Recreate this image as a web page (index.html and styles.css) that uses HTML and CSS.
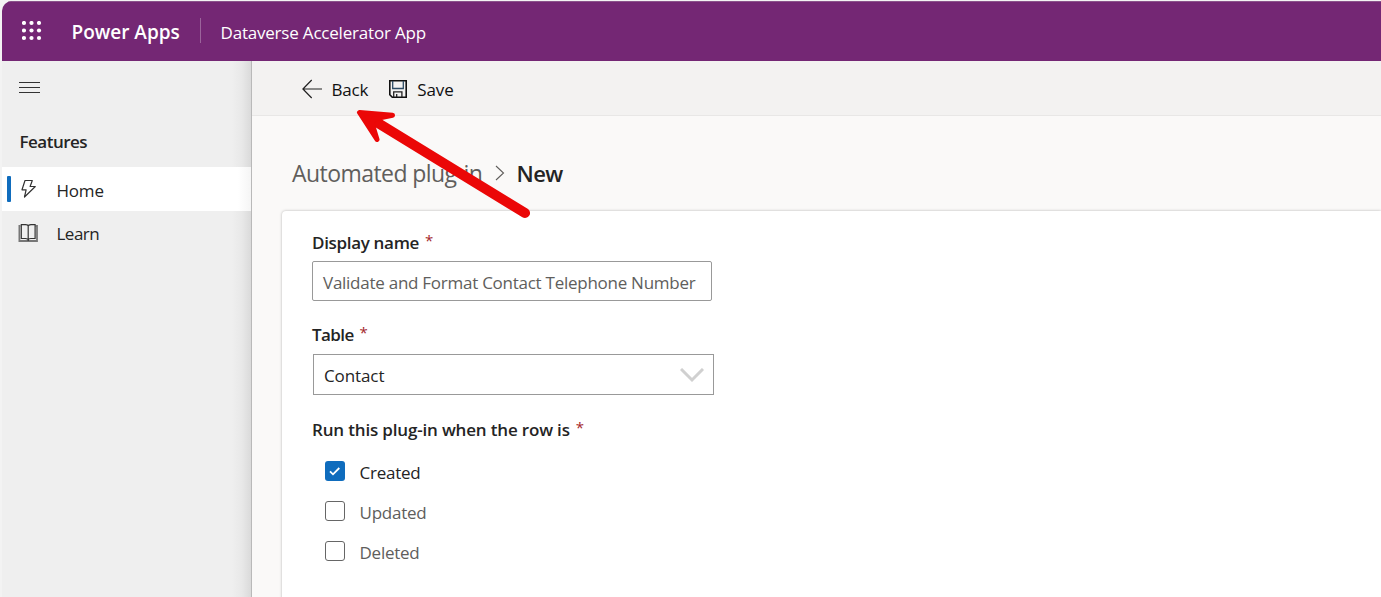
FILE: index.html
```html
<!DOCTYPE html>
<html lang="en">
<head>
<meta charset="utf-8">
<title>Dataverse Accelerator App</title>
<link rel="stylesheet" href="styles.css">
</head>
<body>
<div class="window">
  <header class="topbar">
    <svg class="waffle" width="20" height="20" viewBox="0 0 20 20" fill="#fff"><circle cx="2" cy="2" r="2.1"/><circle cx="9.500" cy="2" r="2.1"/><circle cx="17" cy="2" r="2.1"/><circle cx="2" cy="9.500" r="2.1"/><circle cx="9.500" cy="9.500" r="2.1"/><circle cx="17" cy="9.500" r="2.1"/><circle cx="2" cy="17" r="2.1"/><circle cx="9.500" cy="17" r="2.1"/><circle cx="17" cy="17" r="2.1"/></svg>
    <span class="brand">Power Apps</span>
    <span class="divider"></span>
    <span class="app">Dataverse Accelerator App</span>
  </header>
  <div class="shell">
    <nav class="sidebar">
      <div class="burger"><i></i><i></i><i></i></div>
      <div class="group">Features</div>
      <a class="item active">
        <svg width="20" height="20" viewBox="0 0 20 20" fill="none" stroke="#333" stroke-width="1.2" stroke-linejoin="round"><path d="M7 1.500h7.300l-2.200 6h5.200L6.500 18l1.600-7.200H4z"/></svg>
        <span class="home">Home</span>
      </a>
      <a class="item">
        <svg width="20" height="20" viewBox="0 0 20 20" fill="none"><path d="M2.500 3H1.400v15H19V3h-1.500" stroke="#777" stroke-width="1.800"/><path d="M3.300 15.500V1.700h4.200c1.700 0 2.700.6 2.700 1.600 0-1 1-1.600 2.700-1.600h4.200v13.800h-4.200c-1.700 0-2.700.7-2.700 1.800 0-1.100-1-1.800-2.700-1.800zM10.200 3v15" stroke="#333" stroke-width="1.200"/></svg>
        <span class="learn">Learn</span>
      </a>
    </nav>
    <main class="main">
      <div class="commands">
        <svg width="20" height="20" viewBox="0 0 20 20" fill="none" stroke="#222" stroke-width="1.200"><path d="M9.700 1L.9 10l8.800 9M1 10h19"/></svg>
        <span class="back">Back</span>
        <svg class="save-icon" width="18" height="18" viewBox="0 0 18 18" fill="none"><path d="M.8.8h16.400v16.400H3.300L.8 14.700z" stroke="#111" stroke-width="1.600"/><path d="M3.700 1v7.500h10.600V1" stroke="#2c4a63" stroke-width="1.300"/><path d="M4.700 17v-5.200h8.200V17M7.700 14v3" stroke="#222" stroke-width="1.300"/></svg>
        <span class="save">Save</span>
      </div>
      <div class="crumbs">
        <span class="parent">Automated plug-in</span>
        <svg width="10" height="16" viewBox="0 0 10 16" fill="none" stroke="#605e5c" stroke-width="1.100"><path d="M1 1l7.500 7L1 15"/></svg>
        <span class="current">New</span>
      </div>
      <section class="card">
        <div class="label"><span class="name">Display name</span><b>*</b></div>
        <div class="input">Validate and Format Contact Telephone Number</div>
        <div class="label table"><span class="name">Table</span><b>*</b></div>
        <div class="select"><span>Contact</span>
          <svg width="24" height="16" viewBox="0 0 24 16" fill="none" stroke="#d0d0d0" stroke-width="3"><path d="M1 1l11 11L23 1"/></svg>
        </div>
        <div class="label run"><span class="name">Run this plug-in when the row is</span><b>*</b></div>
        <div class="check on"><span class="box"><svg width="20" height="20" viewBox="0 0 20 20" fill="none" stroke="#fff" stroke-width="1.800"><path d="M5 10.300l3 3L14.300 7"/></svg></span><span class="option">Created</span></div>
        <div class="check"><span class="box"></span><span class="option">Updated</span></div>
        <div class="check"><span class="box"></span><span class="option">Deleted</span></div>
      </section>
    </main>
  </div>
</div>
<svg class="arrow" width="180" height="115" viewBox="0 0 180 115"><path d="M175 103L28 13" stroke="#eb0707" stroke-width="10" stroke-linecap="round"/><path d="M9.500 2.500L42.500 5.200L24 9L22 13L27 29.500z" fill="#eb0707" stroke="#eb0707" stroke-width="5" stroke-linejoin="round"/></svg>
</body>
</html>
```
FILE: styles.css
```css
* { box-sizing: border-box; }
body { margin: 0; height: 597px; overflow: hidden; background: #f3f3f3; font: 17px/24px "Open Sans", "Noto Sans", sans-serif; color: #242424; white-space: nowrap; }
svg { display: block; flex: none; }

.window { margin: 1px 0 0 2px; height: 596px; border-radius: 10px 0 0 0; overflow: hidden; background: #efefef; }

.topbar { height: 60px; display: flex; align-items: center; background: #742774; color: #fff; padding-left: 20px; border-top: 1px solid #8b528b; }
.waffle { margin-bottom: 2px; }
.brand { width: 128px; margin-left: 29.500px; padding-top: 1px; font-weight: 600; font-size: 19px; }
.divider { width: 1px; height: 25px; margin: 0 0 3px .5px; background: #9b649b; }
.app { margin-left: 19.500px; padding-top: 2px; letter-spacing: -.2px; }

.shell { display: flex; height: 536px; }
.sidebar { width: 250px; border-right: 1px solid #b9b9b9; background: linear-gradient(to right, #efefef 230px, #e8e8e8 240px, #dadada 249px); }
.burger { padding: 21px 0 0 17px; display: flex; flex-direction: column; gap: 4px; }
.burger i { width: 21px; height: 1px; background: #333; }
.group { margin-top: 37px; padding-left: 17.500px; font-weight: 600; letter-spacing: -.5px; }
.item { position: relative; display: flex; align-items: center; height: 44px; padding-left: 16px; gap: 18px; }
.active { margin-top: 13px; background: linear-gradient(to right, #fff 236px, #f5f5f5); }
.active::before { content: ""; position: absolute; left: 5px; top: 9px; width: 4px; height: 26px; border-radius: 1px; background: #0f6cbd; }
.home { padding: 3px 0 0 .5px; letter-spacing: -.2px; }
.learn { padding: 1px 0 0 .5px; letter-spacing: -.5px; }

.main { flex: 1; background: #faf9f8; }
.commands { height: 55px; background: #f3f2f1; border-bottom: 1px solid #e8e7e6; display: flex; align-items: center; padding: 2px 0 0 50px; color: #111; }
.back { margin-left: 9.500px; padding-top: 1px; letter-spacing: -.2px; }
.save-icon { margin-left: 20.500px; }
.save { margin-left: 10.500px; padding-top: 1px; letter-spacing: -.1px; }

.crumbs { display: flex; align-items: center; height: 95px; padding: 19px 0 0 40px; font-size: 23px; }
.parent { width: 190px; color: #605e5c; letter-spacing: -.56px; }
.crumbs svg { margin-left: 12.500px; }
.current { margin-left: 12px; color: #242424; font-size: 22px; font-weight: 600; letter-spacing: -.6px; }

.card { margin-left: 30px; height: 390px; background: #fff; border-radius: 4px 0 0 0; box-shadow: 0 0 3px rgba(0,0,0,.28); padding: 20px 0 0 30px; }
.label { display: flex; height: 24px; font-weight: 600; }
.label b { color: #a4262c; font-size: 15px; font-weight: 400; margin: -3px 0 0 6px; }
.name { letter-spacing: -.32px; }
.input, .select { display: flex; align-items: center; width: 400px; height: 40px; margin-top: 6px; padding: 3px 0 0 10px; border: 1px solid #999; border-radius: 2px; }
.input { color: #605e5c; letter-spacing: -.26px; }
.table { margin-top: 22px; }
.table .name { letter-spacing: -.6px; }
.select { justify-content: space-between; width: 401px; height: 41px; margin: 7px 0 0 1px; padding: 2px 9px 0 10px; border-radius: 0; letter-spacing: -.1px; }
.run { margin: 23px 0 9px; }
.run .name { letter-spacing: -.17px; }
.check { display: flex; align-items: center; gap: 14.500px; height: 40px; padding-left: 13px; color: #605e5c; }
.on { color: #242424; }
.box { width: 20px; height: 20px; border: 1px solid #666; border-radius: 3px; }
.on .box { border: 0; background: #0f6cbd; }
.option { padding-top: 3px; letter-spacing: -.25px; }

.arrow { position: absolute; left: 350px; top: 110px; }
```
